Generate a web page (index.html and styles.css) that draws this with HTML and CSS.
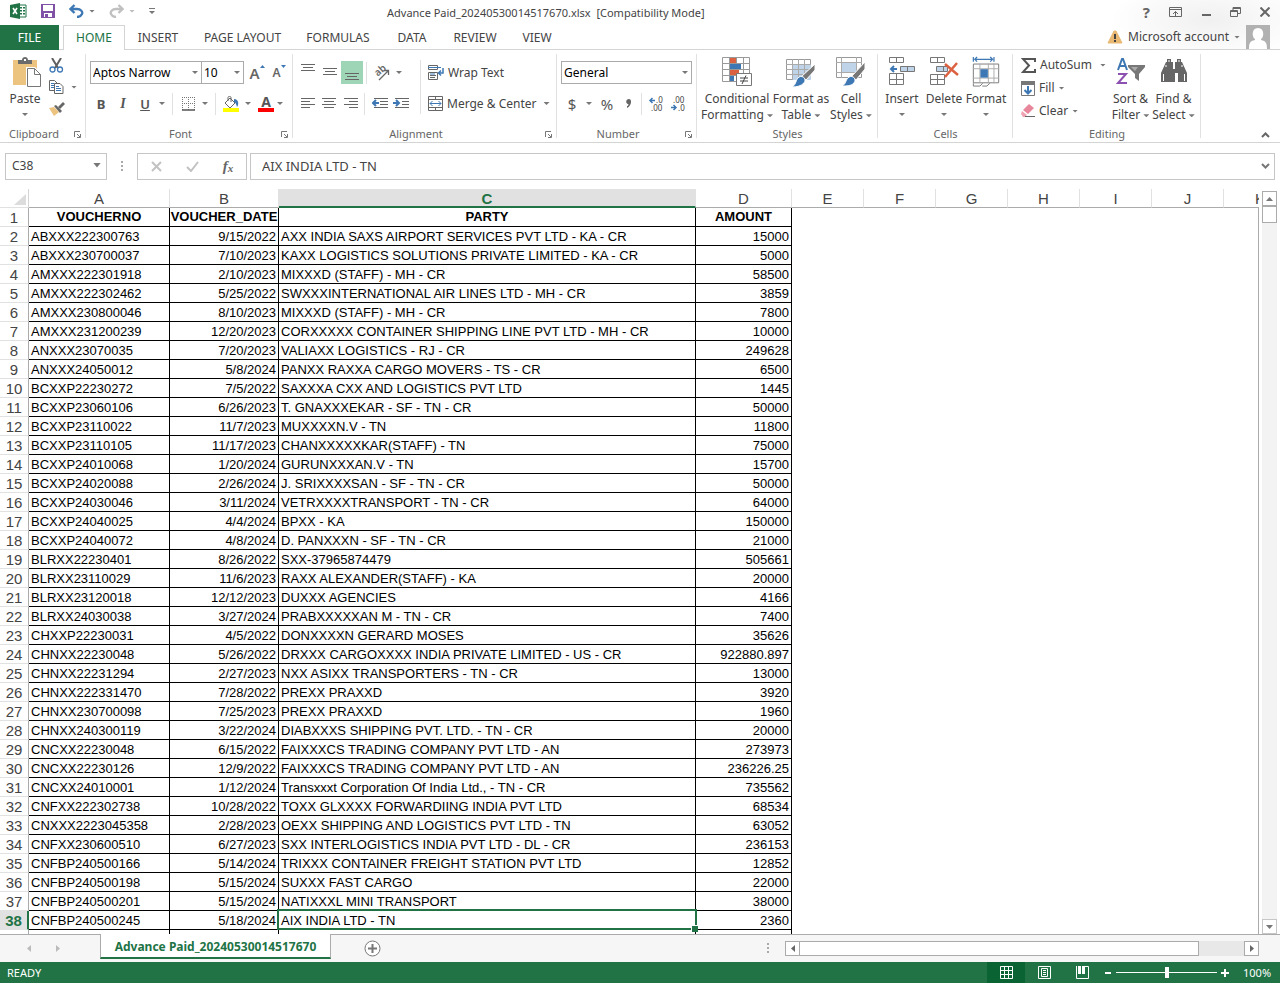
FILE: index.html
```html
<!DOCTYPE html>
<html lang="en">
<head>
<meta charset="utf-8">
<title>Advance Paid_20240530014517670.xlsx</title>
<link rel="stylesheet" href="styles.css">
</head>
<body>
<header class="top">
  <div class="titlebar">
    <div class="quick">
      <svg class="logo" width="17" height="16" viewBox="0 0 17 16"><path d="M9 2h7v12H9z" fill="#fff" stroke="#217346"/><path d="M10 4h2v1.500h-2zM13 4h2v1.500h-2zM10 7h2v1.500h-2zM13 7h2v1.500h-2zM10 10h2v1.500h-2zM13 10h2v1.500h-2z" fill="#217346"/><path d="M0 2l10-2v16L0 14z" fill="#217346"/><path d="M3 5l4 6M7 5l-4 6" stroke="#fff" stroke-width="1.600"/></svg>
      <button aria-label="Save"><svg width="14" height="14" viewBox="0 0 14 14"><path d="M0 0h14v14H0z" fill="#8151a8"/><path d="M2 1h10v6H2zM3 9h8v4H3z" fill="#fff"/><path d="M4 10h3v3H4z" fill="#8151a8"/></svg></button>
      <button class="undo" aria-label="Undo"><svg width="15" height="14" viewBox="0 0 15 14"><path d="M5.500 1L1.500 5l4 4M2 5h6c4 0 6 3 5 5c-1 2-3 3-5 3" fill="none" stroke="#3e78b4" stroke-width="2.300"/></svg><i class="caret"></i></button>
      <button class="undo off" aria-label="Redo"><svg width="15" height="14" viewBox="0 0 15 14"><path d="M9.500 1l4 4l-4 4M13 5H7C3 5 1 8 2 10c1 2 3 3 5 3" fill="none" stroke="#c0c0c0" stroke-width="2.300"/></svg><i class="caret"></i></button>
      <button class="custom" aria-label="Customize toolbar"><i class="caret"></i></button>
    </div>
    <div class="doc">Advance Paid_20240530014517670.xlsx&nbsp; [Compatibility Mode]</div>
    <div class="window">
      <button class="help" aria-label="Help">?</button>
      <button aria-label="Ribbon display options"><svg width="13" height="10" viewBox="0 0 13 10"><path d="M.5.5h12v9H.5zM1 2.500h11M6.500 9V4.500M4 7l2.500-2.500L9 7" fill="none" stroke="#666"/></svg></button>
      <button aria-label="Minimize"><svg width="10" height="10"><path d="M1 7h9v2H1z" fill="#666"/></svg></button>
      <button aria-label="Restore"><svg width="11" height="10" viewBox="0 0 11 10"><path d="M.5 3.500h7v6h-7zM3 3V.5h7.500v6H8M0 4.500h8M3 1.500h7" fill="none" stroke="#666"/></svg></button>
      <button aria-label="Close"><svg width="10" height="10" viewBox="0 0 10 10"><path d="M.5.5l9 9M9.500.5l-9 9" stroke="#666" stroke-width="2"/></svg></button>
    </div>
  </div>
  <nav class="tabs">
    <button class="tab file">FILE</button>
    <button class="tab home">HOME</button>
    <button class="tab insert">INSERT</button>
    <button class="tab layout">PAGE LAYOUT</button>
    <button class="tab formulas">FORMULAS</button>
    <button class="tab data">DATA</button>
    <button class="tab review">REVIEW</button>
    <button class="tab view">VIEW</button>
    <button class="account">
      <svg width="16" height="14" viewBox="0 0 16 14"><path d="M7 1h2l6 12H1z" fill="#e9b973" stroke="#e9b973" stroke-linejoin="round"/><path d="M7 4h2v5H7zM7 10h2v2H7z" fill="#444"/></svg>
      <span>Microsoft account</span><i class="caret"></i>
      <svg class="avatar" width="24" height="24" viewBox="0 0 24 24"><path d="M0 0h24v24H0z" fill="#b1b1b1"/><path d="M12 3c7 0 6 10 3 11v1c5 1 6 3 6 9H3c0-6 1-8 6-9v-1C6 13 5 3 12 3z" fill="#fff"/></svg>
    </button>
  </nav>
</header>

<section class="ribbon">
  <div class="group clipboard">
    <div class="body">
      <button class="big paste"><svg width="28" height="30" viewBox="0 0 28 30"><path d="M0 3h24v25H0z" fill="#ecc37f"/><path d="M5 3h4c0-4 6-4 6 0h4v4H5z" fill="#6b6b6b"/><path d="M11 2h2v2h-2z" fill="#fff"/><path d="M13 10h9l6 6v14H13z" fill="#fff"/><path d="M14.500 11.500h7l6 6v12h-13zM21.500 11.500v6h6" fill="#fff" stroke="#777"/></svg><span>Paste</span><i class="caret"></i></button>
      <div class="clips">
        <button aria-label="Cut"><svg width="15" height="15" viewBox="0 0 15 15"><path d="M3 0l6 10M12 0L6 10" stroke="#5f5f5f" stroke-width="2"/><circle cx="3.500" cy="11.500" r="2.500" fill="none" stroke="#3e78b4" stroke-width="1.300"/><circle cx="11" cy="11.500" r="2.500" fill="none" stroke="#3e78b4" stroke-width="1.300"/></svg></button>
        <button aria-label="Copy"><svg width="15" height="14" viewBox="0 0 15 14"><path d="M.5.5h5l3 3v7h-8z" fill="#fff" stroke="#666"/><path d="M2 3.500h3M2 5.500h4M2 7.500h4" stroke="#3e78b4"/><path d="M5.500 3.500h5.500l3 3v7H5.500z" fill="#fff" stroke="#666"/><path d="M7 6.500h3M7 8.500h5M7 10.500h5" stroke="#3e78b4"/></svg><i class="caret"></i></button>
        <button aria-label="Format painter"><svg width="16" height="14" viewBox="0 0 16 14"><path d="M0 6l5-1 5 5-5 4z" fill="#ecc37f"/><path d="M5 4l2-1 6 6-2 2z" fill="#666"/><path d="M9 5l5-5 2 2-5 5z" fill="#666"/></svg></button>
      </div>
    </div>
    <div class="label">Clipboard<button class="launch" aria-label="Clipboard settings"><svg width="7" height="7"><path d="M.5 6V.5H6M3 3l3 3M6.500 3v3.500H3" fill="none" stroke="#777"/></svg></button></div>
  </div>

  <div class="group font">
    <div class="body rows">
      <div class="row">
        <span class="combo family"><select aria-label="Font"><option>Aptos Narrow</option></select></span><span class="combo size"><select aria-label="Font size"><option>10</option></select></span>
        <button class="grow" aria-label="Grow font"><b>A</b><svg width="5" height="3"><path d="M0 3l2.500-3L5 3z" fill="#3e78b4"/></svg></button>
        <button class="shrink" aria-label="Shrink font"><b>A</b><svg width="5" height="3"><path d="M0 0l2.500 3L5 0z" fill="#3e78b4"/></svg></button>
      </div>
      <div class="row">
        <button class="tool strong">B</button><button class="tool ital">I</button><button class="tool under">U</button><button class="drop" aria-label="Underline options"><i class="caret"></i></button>
        <i class="sep"></i>
        <button class="tool" aria-label="Borders"><svg width="13" height="14" viewBox="0 0 13 14"><path d="M0 .5h13M.5 0v13M12.500 0v13M6.500 0v13M0 6.500h13" stroke="#777" stroke-dasharray="1 1"/><path d="M0 13h13" stroke="#555" stroke-width="1.500"/></svg></button><button class="drop" aria-label="Border options"><i class="caret"></i></button>
        <i class="sep"></i>
        <button class="tool" aria-label="Fill color"><svg width="16" height="16" viewBox="0 0 16 16"><path d="M7 2l5 5-5 5-5-5zM5 5V1.500C5 0 8 0 8 1.500V6" fill="none" stroke="#666"/><path d="M11 3c5 0 5 6 3 8-1-3-1-4-3-5z" fill="#3e78b4"/><path d="M0 12h16v4H0z" fill="#ff0"/></svg></button><button class="drop" aria-label="Fill color options"><i class="caret"></i></button>
        <button class="tool color" aria-label="Font color">A</button><button class="drop" aria-label="Font color options"><i class="caret"></i></button>
      </div>
    </div>
    <div class="label">Font<button class="launch" aria-label="Font settings"><svg width="7" height="7"><path d="M.5 6V.5H6M3 3l3 3M6.500 3v3.500H3" fill="none" stroke="#777"/></svg></button></div>
  </div>

  <div class="group alignment">
    <div class="body">
      <div class="rows">
        <div class="row">
          <button class="tool" aria-label="Top align"><svg width="14" height="18"><path d="M0 .5h14M2 3.500h10M0 6.500h14" stroke="#666"/></svg></button><button class="tool" aria-label="Middle align"><svg width="14" height="18"><path d="M0 4.500h14M2 7.500h10M0 10.500h14" stroke="#666"/></svg></button><button class="tool on" aria-label="Bottom align"><svg width="14" height="18"><path d="M0 9.500h14M2 12.500h10M0 15.500h14" stroke="#666"/></svg></button>
          <i class="sep"></i>
          <button class="tool" aria-label="Orientation"><svg width="18" height="18" viewBox="0 0 18 18"><text x="3" y="12" font-size="10" font-weight="600" font-family="Noto Sans" fill="#666" transform="rotate(-42 5 10)">ab</text><path d="M6 16l9-9M11 6.500h4.500V11" fill="none" stroke="#666" stroke-width="1.300"/></svg></button><button class="drop" aria-label="Orientation options"><i class="caret"></i></button>
        </div>
        <div class="row">
          <button class="tool" aria-label="Align left"><svg width="14" height="14"><path d="M0 1.500h14M0 4.500h9M0 7.500h14M0 10.500h9" stroke="#666"/></svg></button><button class="tool" aria-label="Center"><svg width="14" height="14"><path d="M0 1.500h14M2 4.500h10M0 7.500h14M2 10.500h10" stroke="#666"/></svg></button><button class="tool" aria-label="Align right"><svg width="14" height="14"><path d="M0 1.500h14M5 4.500h9M0 7.500h14M5 10.500h9" stroke="#666"/></svg></button>
          <i class="sep"></i>
          <button class="tool" aria-label="Decrease indent"><svg width="16" height="12"><path d="M2 .5h14M8 3.500h8M8 6.500h8M2 9.500h14" stroke="#666"/><path d="M7 5H1M4 2L1 5l3 3" fill="none" stroke="#3e78b4" stroke-width="2"/></svg></button><button class="tool" aria-label="Increase indent"><svg width="16" height="12"><path d="M2 .5h14M9 3.500h7M9 6.500h7M2 9.500h14" stroke="#666"/><path d="M0 5h6M3 2l3 3-3 3" fill="none" stroke="#3e78b4" stroke-width="2"/></svg></button>
        </div>
      </div>
      <i class="sep tall"></i>
      <div class="rows merge">
        <button class="row item"><svg width="16" height="15" viewBox="0 0 16 15"><path d="M.5.5h9v4h-9zM.5 7.500h9v7h-9zM2 10.500h6M2 12.500h5" fill="none" stroke="#666"/><path d="M0 2.500h13M2 9h5" stroke="#3e78b4"/><path d="M15 3v5h-4M13 5.500L10.500 8l2.500 2.500" fill="none" stroke="#3e78b4" stroke-width="1.500"/></svg><span>Wrap Text</span></button>
        <button class="row item"><svg width="15" height="15" viewBox="0 0 15 15"><path d="M.5.5h14v14H.5zM0 3.500h15M0 11.500h15M7.500 0v3M7.500 12v3" fill="none" stroke="#666"/><path d="M2 7.500h11M4.500 5L2 7.500 4.500 10M10.500 5L13 7.500 10.500 10" fill="none" stroke="#3e78b4"/></svg><span>Merge &amp; Center</span><i class="caret"></i></button>
      </div>
    </div>
    <div class="label">Alignment<button class="launch" aria-label="Alignment settings"><svg width="7" height="7"><path d="M.5 6V.5H6M3 3l3 3M6.500 3v3.500H3" fill="none" stroke="#777"/></svg></button></div>
  </div>

  <div class="group number">
    <div class="body rows">
      <div class="row"><span class="combo format"><select aria-label="Number format"><option>General</option></select></span></div>
      <div class="row">
        <button class="tool sign">$</button><button class="drop" aria-label="Currency options"><i class="caret"></i></button><button class="tool sign pct">%</button><button class="tool comma" aria-label="Comma style"><svg width="5" height="9"><path d="M3 0c3 0 3 6-2 9V7c1 0 2-2 1-2C-1 4 0 0 3 0z" fill="#666"/></svg></button>
        <i class="sep"></i>
        <button class="dec" aria-label="Increase decimal"><svg width="18" height="18"><path d="M2 5.500h5M4.500 3L2 5.500 4.500 8" fill="none" stroke="#3e78b4" stroke-width="1.500"/><text x="8" y="8">.0</text><text x="3" y="16">.00</text></svg></button>
        <button class="dec" aria-label="Decrease decimal"><svg width="18" height="18"><text x="3" y="8">.00</text><path d="M1 12.500h5M3.500 10L6 12.500 3.500 15" fill="none" stroke="#3e78b4" stroke-width="1.500"/><text x="8" y="16">.0</text></svg></button>
      </div>
    </div>
    <div class="label">Number<button class="launch" aria-label="Number settings"><svg width="7" height="7"><path d="M.5 6V.5H6M3 3l3 3M6.500 3v3.500H3" fill="none" stroke="#777"/></svg></button></div>
  </div>

  <div class="group styles">
    <div class="body">
      <button class="big cond"><svg width="30" height="30" viewBox="0 0 30 30"><path d="M.5.5h27v24H.5zM0 6.500h28M0 12.500h28M0 18.500h28M7.500 0v25M14.500 0v25M21.500 0v25" fill="#fff" stroke="#999"/><path d="M8 1h6v5H8zM8 13h9v5H8z" fill="#dc6141"/><path d="M8 7h11v5H8zM8 19h4v5H8z" fill="#3e78b4"/><path d="M14.500 16.500h15v12h-15z" fill="#fff" stroke="#777"/><path d="M18 21h8M18 24h8M24 18.500L20 27" stroke="#444"/></svg><span>Conditional<br>Formatting <i class="caret"></i></span></button>
      <button class="big fmt"><svg width="30" height="30" viewBox="0 0 30 30"><path d="M.5 2.500h24v20H.5z" fill="#fff" stroke="#999"/><path d="M7 8h18v15H7z" fill="#c0d4e9"/><path d="M0 7.500h25M0 12.500h25M0 17.500h25M6.500 2v21M12.500 2v21M18.500 2v21" stroke="#aaa"/><path d="M29 7v6l-9 10-5-3z" fill="#777" stroke="#fff"/><path d="M13 20c4-2 8 2 5 6-3 3-7 4-12 4 5-3 3-7 7-10z" fill="#3e78b4" stroke="#fff"/></svg><span>Format as<br>Table <i class="caret"></i></span></button>
      <button class="big cell"><svg width="30" height="30" viewBox="0 0 30 30"><path d="M.5.5h25v20H.5z" fill="#fff" stroke="#999"/><path d="M6 6h14v9H6z" fill="#c0d4e9"/><path d="M0 5.500h26M0 15.500h26M5.500 0v21M20.500 0v21" stroke="#aaa"/><path d="M29 5v7l-9 11-5-3z" fill="#777" stroke="#fff"/><path d="M13 20c4-2 8 2 5 6-3 3-7 3-12 3 5-3 3-6 7-9z" fill="#3e78b4" stroke="#fff"/></svg><span>Cell<br>Styles <i class="caret"></i></span></button>
    </div>
    <div class="label">Styles</div>
  </div>

  <div class="group cells">
    <div class="body">
      <button class="big"><svg width="28" height="30" viewBox="0 0 28 30"><path d="M1.500.5h14v5h-14zM8.500 0v6M1.500 16.500h14v11h-14zM8.500 17v11M1 22.500h15" fill="none" stroke="#777"/><path d="M12.500 9.500h14v5h-14zM19.500 9v6" fill="#c0d4e9" stroke="#777"/><path d="M9 12H3M6 9l-3 3 3 3" fill="none" stroke="#3e78b4" stroke-width="2"/></svg><span>Insert</span><i class="caret"></i></button>
      <button class="big"><svg width="30" height="30" viewBox="0 0 30 30"><path d="M1.500.5h14v5h-14zM8.500 0v6M1.500 17.500h14v10h-14zM8.500 18v10M1 22.500h15" fill="none" stroke="#777"/><path d="M7.500 9.500h11v5h-11zM14.500 9v6" fill="#c0d4e9" stroke="#777"/><path d="M16 7l13 11M28 6L16 20" stroke="#dc6141" stroke-width="2.500"/></svg><span>Delete</span><i class="caret"></i></button>
      <button class="big"><svg width="28" height="32" viewBox="0 0 28 32"><path d="M.5 0v5M22.500 0v5M2 2.500h19M4.500 0L2 2.500 4.500 5M18.500 0L21 2.500 18.500 5" fill="none" stroke="#3e78b4" stroke-width="1.300"/><path d="M.5 7.500h27v20H.5z" fill="#fff" stroke="#777"/><path d="M0 12.500h28M0 22.500h28M7.500 7v21M16.500 7v21M22.500 7v21" stroke="#aaa"/><path d="M8 13h8v9H8z" fill="#3e78b4"/><path d="M.5 28v3h7l3-3M10 31h5l3-3" fill="none" stroke="#777"/></svg><span>Format</span><i class="caret"></i></button>
    </div>
    <div class="label">Cells</div>
  </div>

  <div class="group editing">
    <div class="body">
      <div class="stack">
        <button class="item"><svg width="15" height="15" viewBox="0 0 15 15"><path d="M14 4V1H2l6 6.500L2 14h12v-3" fill="none" stroke="#555" stroke-width="2"/></svg><span>AutoSum</span><i class="caret far"></i></button>
        <button class="item"><svg width="14" height="15" viewBox="0 0 14 15"><path d="M.5.5h13v14H.5z" fill="#fff" stroke="#777"/><path d="M0 0h14v4H0z" fill="#777"/><path d="M7 5v8M3.500 9L7 12.500 10.500 9" fill="none" stroke="#3e78b4" stroke-width="2"/></svg><span>Fill</span><i class="caret"></i></button>
        <button class="item"><svg width="14" height="14" viewBox="0 0 14 14"><path d="M8 0l5 4-6 6-5-4z" fill="#e8879b"/><path d="M1 7l5 4-2 2H2L0 10z" fill="#f0a4b2"/><path d="M4 12.500h10" stroke="#666"/></svg><span>Clear</span><i class="caret"></i></button>
      </div>
      <button class="big sort"><svg width="30" height="30" viewBox="0 0 30 30"><path d="M2 13L6 2h1l4 11M3 9h7" fill="none" stroke="#3e78b4" stroke-width="2"/><path d="M2 17h8L2 26h9" fill="none" stroke="#8c50b0" stroke-width="2"/><path d="M12 8h17v2l-6 7v7l-4-3v-4l-7-7z" fill="#777"/><path d="M15 10h7l-3 4z" fill="#aaa"/></svg><span>Sort &amp;<br>Filter <i class="caret"></i></span></button>
      <button class="big find"><svg width="26" height="30" viewBox="0 0 26 30"><path d="M6 2h4v3h2v7h2V5h2V2h4v3h1l5 11v9h-9v-9h-3v9H0v-9L5 5h1z" fill="#666"/><path d="M2.500 17v7M5 8v2M23.500 17v7M21 8v2M8 3v2M18 3v2" stroke="#fff"/></svg><span>Find &amp;<br>Select <i class="caret"></i></span></button>
    </div>
    <div class="label">Editing</div>
  </div>
  <button class="collapse" aria-label="Collapse ribbon"><svg width="9" height="6"><path d="M1 5l3.500-3.500L8 5" fill="none" stroke="#666" stroke-width="2"/></svg></button>
</section>

<section class="formula">
  <span class="combo name"><select aria-label="Name box"><option>C38</option></select></span>
  <svg class="grip" width="2" height="11"><path d="M0 0h2v2H0zM0 4h2v2H0zM0 8h2v2H0z" fill="#aaa"/></svg>
  <div class="fx">
    <button aria-label="Cancel"><svg width="11" height="11"><path d="M1 1l9 9M10 1l-9 9" stroke="#c2c2c2" stroke-width="2"/></svg></button>
    <button aria-label="Enter"><svg width="13" height="11"><path d="M1 6l4 4 7-9" fill="none" stroke="#c2c2c2" stroke-width="2"/></svg></button>
    <button class="fn" aria-label="Insert function">f<small>x</small></button>
  </div>
  <div class="entry"><input aria-label="Formula bar" value="AIX INDIA LTD - TN"><button aria-label="Expand formula bar"><svg width="9" height="6"><path d="M1 1l3.500 3.500L8 1" fill="none" stroke="#777" stroke-width="2"/></svg></button></div>
</section>

<main class="work">
<div class="sheet">
<table>
<colgroup><col class="c-row"><col class="c-a"><col class="c-b"><col class="c-c"><col class="c-d"><col class="c-e"><col class="c-e"><col class="c-e"><col class="c-e"><col class="c-e"><col class="c-e"><col></colgroup>
<thead><tr><th class="corner"><svg width="12" height="11"><path d="M12 0v11H0z" fill="#dcdcdc"/></svg></th><th>A</th><th>B</th><th class="sel">C</th><th>D</th><th>E</th><th>F</th><th>G</th><th>H</th><th>I</th><th>J</th><th class="last">K</th></tr></thead>
<tbody>
<tr class="names"><th>1</th><td>VOUCHERNO</td><td>VOUCHER_DATE</td><td>PARTY</td><td>AMOUNT</td><td class="blank" colspan="7" rowspan="39"></td></tr>
<tr><th>2</th><td>ABXXX222300763</td><td>9/15/2022</td><td>AXX INDIA SAXS AIRPORT SERVICES PVT LTD - KA - CR</td><td>15000</td></tr>
<tr><th>3</th><td>ABXXX230700037</td><td>7/10/2023</td><td>KAXX LOGISTICS SOLUTIONS PRIVATE LIMITED - KA - CR</td><td>5000</td></tr>
<tr><th>4</th><td>AMXXX222301918</td><td>2/10/2023</td><td>MIXXXD (STAFF) - MH - CR</td><td>58500</td></tr>
<tr><th>5</th><td>AMXXX222302462</td><td>5/25/2022</td><td>SWXXXINTERNATIONAL AIR LINES LTD - MH - CR</td><td>3859</td></tr>
<tr><th>6</th><td>AMXXX230800046</td><td>8/10/2023</td><td>MIXXXD (STAFF) - MH - CR</td><td>7800</td></tr>
<tr><th>7</th><td>AMXXX231200239</td><td>12/20/2023</td><td>CORXXXXX CONTAINER SHIPPING LINE PVT LTD - MH - CR</td><td>10000</td></tr>
<tr><th>8</th><td>ANXXX23070035</td><td>7/20/2023</td><td>VALIAXX LOGISTICS - RJ - CR</td><td>249628</td></tr>
<tr><th>9</th><td>ANXXX24050012</td><td>5/8/2024</td><td>PANXX RAXXA CARGO MOVERS - TS - CR</td><td>6500</td></tr>
<tr><th>10</th><td>BCXXP22230272</td><td>7/5/2022</td><td>SAXXXA CXX AND LOGISTICS PVT LTD</td><td>1445</td></tr>
<tr><th>11</th><td>BCXXP23060106</td><td>6/26/2023</td><td>T. GNAXXXEKAR - SF - TN - CR</td><td>50000</td></tr>
<tr><th>12</th><td>BCXXP23110022</td><td>11/7/2023</td><td>MUXXXXN.V - TN</td><td>11800</td></tr>
<tr><th>13</th><td>BCXXP23110105</td><td>11/17/2023</td><td>CHANXXXXXKAR(STAFF) - TN</td><td>75000</td></tr>
<tr><th>14</th><td>BCXXP24010068</td><td>1/20/2024</td><td>GURUNXXXAN.V - TN</td><td>15700</td></tr>
<tr><th>15</th><td>BCXXP24020088</td><td>2/26/2024</td><td>J. SRIXXXXSAN - SF - TN - CR</td><td>50000</td></tr>
<tr><th>16</th><td>BCXXP24030046</td><td>3/11/2024</td><td>VETRXXXXTRANSPORT - TN - CR</td><td>64000</td></tr>
<tr><th>17</th><td>BCXXP24040025</td><td>4/4/2024</td><td>BPXX - KA</td><td>150000</td></tr>
<tr><th>18</th><td>BCXXP24040072</td><td>4/8/2024</td><td>D. PANXXXN - SF - TN - CR</td><td>21000</td></tr>
<tr><th>19</th><td>BLRXX22230401</td><td>8/26/2022</td><td>SXX-37965874479</td><td>505661</td></tr>
<tr><th>20</th><td>BLRXX23110029</td><td>11/6/2023</td><td>RAXX ALEXANDER(STAFF) - KA</td><td>20000</td></tr>
<tr><th>21</th><td>BLRXX23120018</td><td>12/12/2023</td><td>DUXXX AGENCIES</td><td>4166</td></tr>
<tr><th>22</th><td>BLRXX24030038</td><td>3/27/2024</td><td>PRABXXXXXAN M - TN - CR</td><td>7400</td></tr>
<tr><th>23</th><td>CHXXP22230031</td><td>4/5/2022</td><td>DONXXXXN GERARD MOSES</td><td>35626</td></tr>
<tr><th>24</th><td>CHNXX22230048</td><td>5/26/2022</td><td>DRXXX CARGOXXXX INDIA PRIVATE LIMITED - US - CR</td><td>922880.897</td></tr>
<tr><th>25</th><td>CHNXX22231294</td><td>2/27/2023</td><td>NXX ASIXX TRANSPORTERS - TN - CR</td><td>13000</td></tr>
<tr><th>26</th><td>CHNXX222331470</td><td>7/28/2022</td><td>PREXX PRAXXD</td><td>3920</td></tr>
<tr><th>27</th><td>CHNXX230700098</td><td>7/25/2023</td><td>PREXX PRAXXD</td><td>1960</td></tr>
<tr><th>28</th><td>CHNXX240300119</td><td>3/22/2024</td><td>DIABXXXS SHIPPING PVT. LTD. - TN - CR</td><td>20000</td></tr>
<tr><th>29</th><td>CNCXX22230048</td><td>6/15/2022</td><td>FAIXXXCS TRADING COMPANY PVT LTD - AN</td><td>273973</td></tr>
<tr><th>30</th><td>CNCXX22230126</td><td>12/9/2022</td><td>FAIXXXCS TRADING COMPANY PVT LTD - AN</td><td>236226.25</td></tr>
<tr><th>31</th><td>CNCXX24010001</td><td>1/12/2024</td><td>Transxxxt Corporation Of India Ltd., - TN - CR</td><td>735562</td></tr>
<tr><th>32</th><td>CNFXX222302738</td><td>10/28/2022</td><td>TOXX GLXXXX FORWARDIING INDIA PVT LTD</td><td>68534</td></tr>
<tr><th>33</th><td>CNXXX2223045358</td><td>2/28/2023</td><td>OEXX SHIPPING AND LOGISTICS PVT LTD - TN</td><td>63052</td></tr>
<tr><th>34</th><td>CNFXX230600510</td><td>6/27/2023</td><td>SXX INTERLOGISTICS INDIA PVT LTD - DL - CR</td><td>236153</td></tr>
<tr><th>35</th><td>CNFBP240500166</td><td>5/14/2024</td><td>TRIXXX CONTAINER FREIGHT STATION PVT LTD</td><td>12852</td></tr>
<tr><th>36</th><td>CNFBP240500198</td><td>5/15/2024</td><td>SUXXX FAST CARGO</td><td>22000</td></tr>
<tr><th>37</th><td>CNFBP240500201</td><td>5/15/2024</td><td>NATIXXXL MINI TRANSPORT</td><td>38000</td></tr>
<tr class="current"><th>38</th><td>CNFBP240500245</td><td>5/18/2024</td><td class="active">AIX INDIA LTD - TN</td><td>2360</td></tr>
<tr><th></th><td></td><td></td><td></td><td></td></tr>
</tbody>
</table>
</div>
<div class="vscroll">
  <button aria-label="Scroll up"><svg width="7" height="4"><path d="M0 4l3.500-4L7 4z" fill="#777"/></svg></button>
  <div class="thumb"></div>
  <button class="down" aria-label="Scroll down"><svg width="7" height="4"><path d="M0 0l3.500 4L7 0z" fill="#777"/></svg></button>
</div>
</main>

<section class="sheets">
  <div class="nav">
    <button aria-label="Previous sheet"><svg width="4" height="7"><path d="M4 0v7L0 3.500z" fill="#bbb"/></svg></button>
    <button aria-label="Next sheet"><svg width="4" height="7"><path d="M0 0v7l4-3.500z" fill="#bbb"/></svg></button>
  </div>
  <button class="sheettab">Advance Paid_20240530014517670</button>
  <div class="rest">
    <button class="add" aria-label="New sheet"><svg width="17" height="17"><circle cx="8.500" cy="8.500" r="7.500" fill="#fff" stroke="#777"/><path d="M4 8.500h9M8.500 4v9" stroke="#777" stroke-width="2"/></svg></button>
    <svg class="grip" width="2" height="11"><path d="M0 0h2v2H0zM0 4h2v2H0zM0 8h2v2H0z" fill="#aaa"/></svg>
    <div class="hscroll">
      <button aria-label="Scroll left"><svg width="4" height="7"><path d="M4 0v7L0 3.500z" fill="#666"/></svg></button>
      <div class="thumb"></div>
      <button aria-label="Scroll right"><svg width="4" height="7"><path d="M0 0v7l4-3.500z" fill="#666"/></svg></button>
    </div>
  </div>
</section>

<footer class="status">
  <span>READY</span>
  <div class="views">
    <button class="on" aria-label="Normal view"><svg width="13" height="13"><path d="M.5.5h12v12H.5zM4.500 0v13M8.500 0v13M0 4.500h13M0 8.500h13" fill="none" stroke="#fff"/></svg></button>
    <button aria-label="Page layout view"><svg width="13" height="13"><path d="M.5.5h12v12H.5zM3.500 2.500h6v8h-6zM5 4.500h3M5 6.500h3M5 8.500h3" fill="none" stroke="#fff"/></svg></button>
    <button aria-label="Page break view"><svg width="13" height="13"><path d="M2 0h3v8H2zM6 0h3v8H6z" fill="#fff"/><path d="M.5 0v12.500h12V.5H9" fill="none" stroke="#fff"/></svg></button>
  </div>
  <button class="zoom" aria-label="Zoom out"><svg width="7" height="7"><path d="M0 3h6v2H0z" fill="#fff"/></svg></button>
  <input type="range" min="0" max="100" value="50" aria-label="Zoom">
  <button class="zoom" aria-label="Zoom in"><svg width="8" height="8"><path d="M0 3h8v2H0zM3 0h2v8H3z" fill="#fff"/></svg></button>
  <span class="pct">100%</span>
</footer>
</body>
</html>
```
FILE: styles.css
```css
* { box-sizing: border-box; }
body {
  margin: 0;
  height: 100vh;
  display: flex;
  flex-direction: column;
  overflow: hidden;
  background: #fff;
  color: #444;
  font: 12px/16px "Noto Sans", "Open Sans", sans-serif;
}
button, select, input { font: inherit; color: inherit; }
button {
  display: flex;
  align-items: center;
  justify-content: center;
  margin: 0;
  padding: 0;
  border: 0;
  background: none;
  white-space: nowrap;
}
svg { display: block; flex: none; }
.caret {
  display: inline-block;
  flex: none;
  width: 6px;
  height: 3px;
  background: #777;
  clip-path: polygon(0 0, 100% 0, 50% 100%);
  vertical-align: middle;
}

/* Title bar and tabs */
.top { background: radial-gradient(ellipse 100px 40px at calc(100% - 70px) 20px, #f0f0f0, #fff); }
.titlebar { display: grid; grid-template-columns: 387px 1fr auto; height: 25px; padding-right: 10px; }
.quick { display: flex; align-items: center; gap: 14px; height: 22px; padding-left: 10px; }
.undo { gap: 5px; }
.off .caret { background: #bbb; }
.custom { border-top: 1px solid #777; padding-top: 2px; }
.doc { font-size: 11px; line-height: 25px; white-space: nowrap; }
.window { display: flex; align-items: center; gap: 19px; height: 23px; }
.help { font: bold 15px/20px "Noto Sans", sans-serif; color: #666; }
.tabs { display: flex; height: 25px; border-bottom: 1px solid #d4d4d4; }
.tab { height: 25px; }
.file { width: 59px; margin-right: 4px; background: #217346; color: #fff; }
.home { width: 62px; border: 1px solid #d4d4d4; border-bottom: 0; background: #fff; color: #217346; }
.insert, .review { width: 66px; }
.layout { width: 103px; }
.formulas { width: 88px; }
.data { width: 60px; }
.view { width: 58px; }
.account { margin: 0 10px 0 auto; gap: 5px; height: 24px; }
.avatar { margin-left: 1px; }

/* Ribbon */
.ribbon { display: flex; height: 93px; padding-top: 4px; border-bottom: 1px solid #d4d4d4; }
.group { position: relative; flex: none; }
.group::after { content: ""; position: absolute; right: 0; top: 0; bottom: 4px; width: 1px; background: #e1e1e1; }
.body { display: flex; height: 72px; }
.label { height: 16px; text-align: center; font-size: 11px; color: #666; padding-right: 18px; }
.styles .label, .cells .label, .editing .label { padding-right: 0; }
.launch { position: absolute; right: 5px; bottom: 4px; }
.clipboard { width: 86px; }
.font { width: 207px; }
.alignment { width: 264px; }
.number { width: 140px; }
.styles { width: 181px; }
.cells { width: 135px; }
.editing { width: 188px; }
.big { flex-direction: column; justify-content: flex-start; padding-top: 3px; line-height: 16px; }
.big svg { margin-bottom: 4px; }
.big > .caret { margin-top: 6px; }
.paste { width: 28px; margin-left: 11px; }
.paste svg { margin-left: 4px; }
.clips { display: grid; grid-template-rows: 22px 22px 22px; justify-items: start; margin-left: 10px; }
.clips button { gap: 7px; }
.rows { display: flex; flex-direction: column; gap: 8px; padding: 7px 0 0 4px; }
.row { display: flex; align-items: center; height: 23px; }
.combo { position: relative; display: block; height: 23px; }
.combo::after { content: ""; position: absolute; right: 4px; top: 10px; width: 6px; height: 3px; background: #777; clip-path: polygon(0 0, 100% 0, 50% 100%); }
.combo select {
  display: block;
  width: 100%;
  height: 100%;
  padding: 0 2px;
  border: 1px solid #ababab;
  border-radius: 0;
  background: #fff;
  color: #000;
  appearance: none;
}
.family { width: 112px; }
.size { width: 43px; margin-left: -1px; }
.format { width: 131px; }
.grow, .shrink { align-items: flex-start; width: 22px; color: #666; }
.grow { margin-left: 2px; }
.grow b { font-size: 15px; font-weight: 600; }
.shrink b { font-size: 12px; font-weight: 600; }
.tool { width: 22px; height: 23px; color: #555; }
.on.tool { background: #9fd5b7; }
.strong { font-weight: bold; font-size: 13px; }
.ital { font: italic bold 14px "Liberation Serif", serif; }
.under { font-weight: 600; font-size: 13px; text-decoration: underline; }
.drop { width: 12px; height: 22px; }
.sep { width: 1px; height: 22px; margin: 0 4px; background: #e1e1e1; }
.color { width: 16px; height: 17px; margin-left: 4px; border-bottom: 4px solid #f00; font-weight: bold; font-size: 14px; line-height: 14px; }
.alignment .sep { margin: 0 4px 0 3px; }
.alignment .tall { height: 54px; margin: 6px 7px 0 8px; }
.alignment .body > .rows:first-child { width: 119px; }
.rows.merge { padding-left: 0; }
.item { gap: 4px; justify-content: flex-start; }
.merge .caret { margin-left: 3px; }
.sign { font-size: 15px; }
.drop + .pct { width: 24px; }
.comma { width: 18px; }
.dec { width: 22px; height: 22px; }
.dec text { font: 8px "Noto Sans", sans-serif; fill: #444; }
.cond { width: 74px; margin-left: 3px; }
.fmt { width: 54px; }
.cell { width: 46px; }
.cells .body { padding-left: 3px; }
.cells .big { width: 42px; }
.cells .big svg { height: 30px; overflow: visible; }
.stack { display: flex; flex-direction: column; gap: 7px; width: 96px; padding: 3px 0 0 8px; }
.far { margin-left: 4px; }
.sort { width: 43px; }
.find { width: 43px; }
.collapse { margin: auto 10px 4px auto; }

/* Formula bar */
.formula { display: flex; align-items: center; height: 46px; padding: 0 5px; }
.name { width: 102px; height: 27px; }
.name select { padding-left: 6px; color: #444; border-color: #c6c6c6; }
.name::after { width: 8px; height: 5px; right: 6px; }
.formula .grip { margin: 0 14px; }
.fx { display: flex; width: 110px; height: 27px; border: 1px solid #c6c6c6; }
.fx button { flex: 1; }
.fn { font: italic bold 15px "Liberation Serif", serif; color: #666; }
.fn small { font-size: 11px; padding-top: 4px; }
.entry { display: flex; flex: 1; height: 27px; margin-left: 3px; border: 1px solid #c6c6c6; padding-right: 4px; }
.entry input { flex: 1; min-width: 0; border: 0; padding: 0 11px; background: none; font-size: 13px; }

/* Worksheet */
.work { display: flex; flex: 1; min-height: 0; }
.sheet { flex: 1; min-width: 0; overflow: hidden; }
table { width: 100%; table-layout: fixed; border-collapse: separate; border-spacing: 0; color: #000; font: 13px/16px "Liberation Sans", Arial, sans-serif; }
.c-row { width: 29px; }
.c-a { width: 141px; }
.c-b { width: 109px; }
.c-c { width: 417px; }
.c-d { width: 96px; }
.c-e { width: 72px; }
th { height: 19px; padding: 2px 0 0; font-weight: normal; font-size: 15px; color: #444; white-space: nowrap; overflow: hidden; }
thead th { border-bottom: 1px solid #ababab; border-right: 1px solid #e1e1e1; }
thead .corner { border-bottom-color: #e1e1e1; border-right-color: #d4d4d4; }
.corner svg { margin: 1px 0 0 14px; }
thead .sel { background: #e1e1e1; color: #217346; font-weight: bold; border-bottom: 2px solid #217346; line-height: 15px; }
thead .last { border-right: 0; text-align: left; padding-left: 31px; }
tbody th { border-right: 1px solid #ababab; border-bottom: 1px solid #e1e1e1; }
td { height: 19px; padding: 2px 2px 0; border-right: 1px solid #000; border-bottom: 1px solid #000; white-space: nowrap; }
td:nth-child(3), td:nth-child(5) { text-align: right; }
tbody .names td { padding: 1px 0; font-weight: bold; text-align: center; }
tbody td.blank { border-right: 1px solid #ababab; border-bottom: 0; }
.current th { background: #e1e1e1; color: #217346; font-weight: bold; border-right: 2px solid #217346; }
.active { position: relative; }
.active::before { content: ""; position: absolute; inset: -2px -2px -1px -2px; border: 2px solid #217346; }
.active::after { content: ""; position: absolute; right: -3px; bottom: -3px; width: 6px; height: 6px; background: #217346; border: solid #fff; border-width: 1px 0 0 1px; }
.vscroll { display: flex; flex-direction: column; width: 15px; margin: 2px 3px 0; background: #f3f3f3; }
.vscroll button { height: 15px; border: 1px solid #ababab; background: #fff; }
.vscroll .thumb { height: 17px; border: 1px solid #ababab; background: #fff; }
.vscroll .down { margin-top: auto; border-color: #c6c6c6; }

/* Sheet tabs */
.sheets { display: flex; height: 28px; background: #f6f6f6; }
.nav { display: flex; align-items: center; gap: 25px; width: 100px; padding-left: 27px; border-top: 1px solid #ababab; }
.sheettab { width: 231px; height: 25px; padding-top: 3px; border: 1px solid #ababab; border-top: 0; border-bottom: 2px solid #217346; background: #fff; color: #217346; font-weight: bold; }
.rest { display: flex; flex: 1; align-items: center; border-top: 1px solid #ababab; padding: 0 21px 0 33px; }
.sheets .grip { margin: 0 16px 0 auto; }
.hscroll { display: flex; width: 474px; height: 15px; background: #e8e8e8; }
.hscroll button { width: 15px; border: 1px solid #ababab; background: #fff; }
.hscroll .thumb { width: 400px; margin: 0 auto 0 -1px; border: 1px solid #ababab; background: #fff; }

/* Status bar */
.status { display: flex; align-items: center; height: 21px; padding: 0 9px 0 7px; background: #217346; color: #fff; font-size: 11px; }
.views { display: flex; margin-left: auto; margin-right: 4px; }
.views button { width: 38px; height: 21px; }
.views .on { background: #0a6332; }
.status input { width: 101px; height: 15px; margin: 0 4px; appearance: none; background: linear-gradient(#fff, #fff) center / 100% 1px no-repeat; }
.status input::-webkit-slider-thumb { appearance: none; width: 4px; height: 11px; background: #fff; }
.status .pct { width: 28px; margin-left: 14px; text-align: right; white-space: nowrap; }
```
